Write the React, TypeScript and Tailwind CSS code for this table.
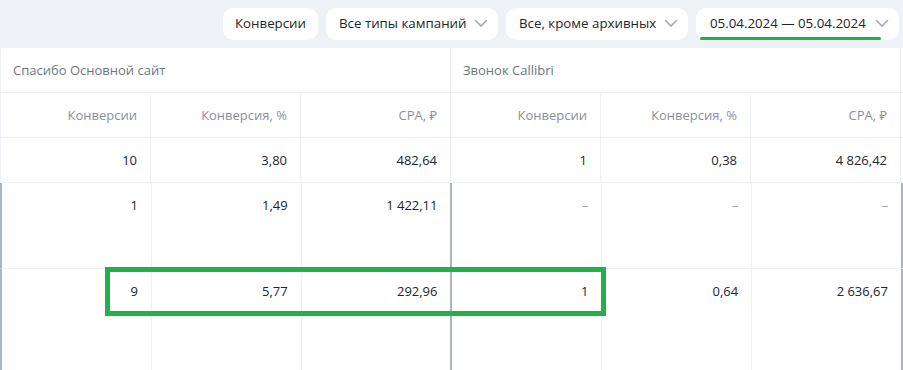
import React from 'react';

const font = { fontFamily: '"Open Sans", "Noto Sans", sans-serif' };

function Chevron() {
  return (
    <svg width="14" height="9" viewBox="0 0 14 9" className="shrink-0 text-[#a3aab8]">
      <path d="M1.5 1.5 L7 7 L12.5 1.5" fill="none" stroke="currentColor" strokeWidth="1.6" strokeLinecap="round" />
    </svg>
  );
}

function Pill({ label, chevron = true, className = '' }: { label: string; chevron?: boolean; className?: string }) {
  return (
    <div className={`h-[32px] flex items-center bg-white rounded-[10px] text-[13.3px] text-[#22252d] whitespace-nowrap ${className}`}>
      <span>{label}</span>
      {chevron && <Chevron />}
    </div>
  );
}

const cols = ['Конверсии', 'Конверсия, %', 'CPA, ₽'];

type Cell = string | null;
const rows: { h: string; dark: boolean; vals: Cell[] }[] = [
  { h: 'h-[45px]', dark: false, vals: ['10', '3,80', '482,64', '1', '0,38', '4 826,42'] },
  { h: 'h-[86px]', dark: true, vals: ['1', '1,49', '1 422,11', null, null, null] },
  { h: 'h-[120px]', dark: true, vals: ['9', '5,77', '292,96', '1', '0,64', '2 636,67'] },
];

export default function App() {
  return (
    <div className="w-[903px] h-[370px] overflow-hidden bg-[#eef1f6] relative" style={font}>
      <div className="h-[48px] flex items-center justify-end gap-[8px] pr-[4px] pb-[1px]">
        <Pill label="Конверсии" chevron={false} className="w-[95px] justify-center" />
        <Pill label="Все типы кампаний" className="w-[172px] pl-[13px] pr-[10px] justify-between" />
        <Pill label="Все, кроме архивных" className="w-[182px] pl-[13px] pr-[10px] justify-between" />
        <Pill label="05.04.2024 — 05.04.2024" className="w-[203px] pl-[14px] pr-[10px] justify-between" />
        <div className="absolute left-[700px] top-[37px] w-[181px] h-[3px] rounded-full bg-[#22b04b]" />
      </div>

      <div className="bg-white w-[902px] ml-[1px] h-[322px]">
        <div className="flex h-[45px] border-b border-[#eef0f4]">
          <div className="w-[450px] border-r border-[#eef0f4] px-[12px] pt-[1px] flex items-center text-[13px] text-[#6f7584]">Спасибо Основной сайт</div>
          <div className="w-[450px] border-r border-[#eef0f4] px-[12px] pt-[1px] flex items-center text-[13px] text-[#6f7584]">Звонок Callibri</div>
        </div>
        <div className="flex h-[45px] border-b border-[#eef0f4]">
          {[...cols, ...cols].map((c, i) => (
            <div key={i} className="w-[150px] border-r border-[#eef0f4] pr-[13px] pt-[1px] flex items-center justify-end text-[13px] text-[#8a90a0]">{c}</div>
          ))}
        </div>
        {rows.map((r, ri) => (
          <div key={ri} className={`flex ${r.h} border-b border-[#eef0f4] ${r.dark ? 'border-l-2 border-l-[#a9b2c6] -ml-[1px]' : ''}`}>
            {r.vals.map((v, i) => (
              <div
                key={i}
                className={`w-[150px] pr-[13px] pt-[13px] text-right text-[13px] ${
                  r.dark && (i === 2 || i === 5) ? 'border-r-2 border-r-[#a9b2c6] w-[151px]' : 'border-r border-[#eef0f4]'
                } ${v === null ? 'text-[#9aa3b5]' : 'text-[#22252d]'}`}
              >
                {v === null ? '–' : v}
              </div>
            ))}
          </div>
        ))}
      </div>

      <div className="absolute left-[105px] top-[267px] w-[501px] h-[49px] border-[5px] border-[#22b04b]" />
    </div>
  );
}
